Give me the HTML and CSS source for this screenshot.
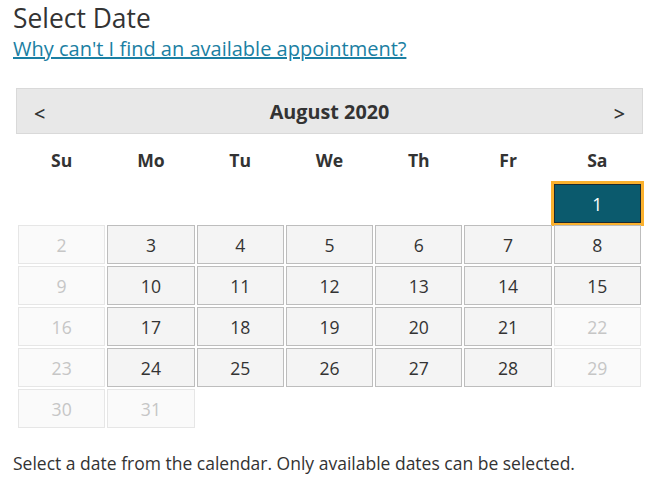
FILE: index.html
```html
<!DOCTYPE html>
<html>
<head>
<meta charset="utf-8">
<link rel="stylesheet" href="styles.css">
</head>
<body>
<div class="page">
  <h1 class="title">Select Date</h1>
  <a class="help" href="#">Why can't I find an available appointment?</a>
  <div class="calendar">
    <div class="cal-head">
      <span class="nav">&lt;</span>
      <span class="month">August 2020</span>
      <span class="nav">&gt;</span>
    </div>
    <div class="weekdays">
      <span>Su</span><span>Mo</span><span>Tu</span><span>We</span><span>Th</span><span>Fr</span><span>Sa</span>
    </div>
    <div class="days">
      <span class="blank"></span><span class="blank"></span><span class="blank"></span><span class="blank"></span><span class="blank"></span><span class="blank"></span>
      <span class="day selected">1</span>
      <span class="day off">2</span><span class="day">3</span><span class="day">4</span><span class="day">5</span><span class="day">6</span><span class="day">7</span><span class="day">8</span>
      <span class="day off">9</span><span class="day">10</span><span class="day">11</span><span class="day">12</span><span class="day">13</span><span class="day">14</span><span class="day">15</span>
      <span class="day off">16</span><span class="day">17</span><span class="day">18</span><span class="day">19</span><span class="day">20</span><span class="day">21</span><span class="day off">22</span>
      <span class="day off">23</span><span class="day">24</span><span class="day">25</span><span class="day">26</span><span class="day">27</span><span class="day">28</span><span class="day off">29</span>
      <span class="day off">30</span><span class="day off">31</span>
    </div>
  </div>
  <p class="note">Select a date from the calendar. Only available dates can be selected.</p>
</div>
</body>
</html>
```
FILE: styles.css
```css
html, body {
  margin: 0;
  padding: 0;
  background: #fff;
}
body {
  font-family: "Open Sans", "Liberation Sans", sans-serif;
  color: #333;
}
.page {
  padding: 1px 12px 0 13px;
}
.title {
  margin: 0;
  font-size: 26.4px;
  font-weight: 400;
  line-height: 35px;
  color: #333;
}
.help {
  display: block;
  width: max-content;
  font-size: 20px;
  line-height: 26px;
  color: #1b7fa3;
  text-decoration: underline;
}
.calendar {
  width: 627px;
  margin: 26px 0 0 3px;
}
.cal-head {
  height: 44px;
  background: #e8e8e8;
  border: 1px solid #d9d9d9;
  display: flex;
  align-items: center;
  justify-content: space-between;
  padding: 0 17px 0 17px;
}
.nav {
  font-size: 19.8px;
  font-weight: 600;
  color: #333;
  padding-top: 5px;
}
.month {
  font-size: 19.8px;
  font-weight: 700;
  color: #333;
}
.weekdays {
  display: grid;
  grid-template-columns: repeat(7, 1fr);
  column-gap: 2px;
  padding: 3px 2px 0 2px;
  height: 45px;
  align-items: center;
  font-size: 17.6px;
  font-weight: 700;
  text-align: center;
}
.days {
  display: grid;
  grid-template-columns: repeat(7, 1fr);
  grid-auto-rows: 39px;
  gap: 2px;
  padding: 2px;
}
.day {
  display: flex;
  align-items: center;
  justify-content: center;
  font-size: 17.6px;
  background: #f4f4f4;
  border: 1px solid #bdbdbd;
  color: #333;
}
.day.off {
  background: #fafafa;
  border-color: #e6e6e6;
  color: #c6c6c6;
}
.day.selected {
  background: #0b5a6d;
  border-color: #1d2a30;
  color: #fff;
  outline: 3px solid #fbb12e;
}
.note {
  margin: 21px 0 0 0;
  font-size: 17.5px;
  line-height: 24px;
}
```
